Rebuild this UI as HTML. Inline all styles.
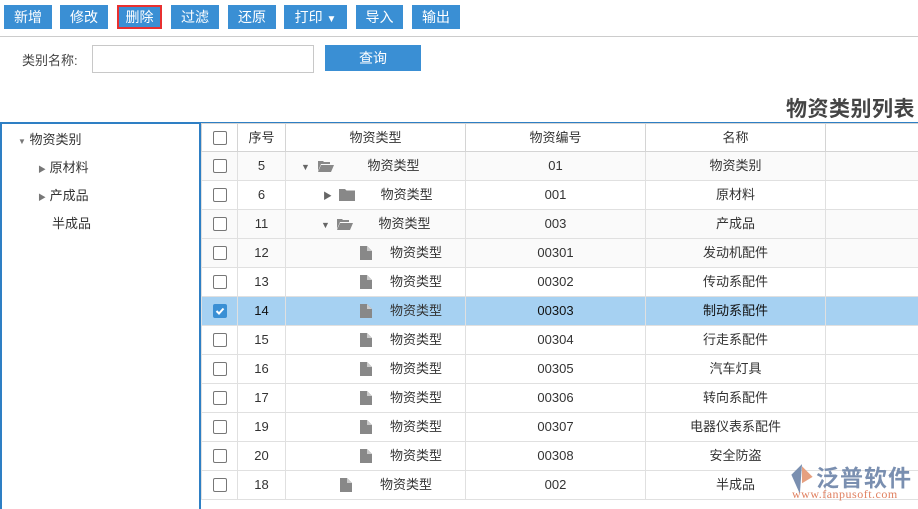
<!DOCTYPE html>
<html><head><meta charset="utf-8"><style>
*{margin:0;padding:0;box-sizing:border-box}
body{width:918px;height:509px;overflow:hidden;background:#fff;font-family:"Liberation Sans","Noto Sans CJK SC",sans-serif;font-size:13px;color:#333;position:relative}
.btn{position:absolute;top:5px;height:24px;background:#3a8fd4;color:#fff;font-size:14px;line-height:24px;text-align:center}
.abs{position:absolute}
table{position:absolute;left:201px;top:123px;border-collapse:collapse;table-layout:fixed;width:724px}
td,th{border:1px solid #e0e0e0;height:29px;text-align:center;font-weight:normal;font-size:13px;padding:0;white-space:nowrap;line-height:14px}
th{height:28px;border-color:#d4d4d4}
tr.alt td{background:#fafafa}
tr.sel td{background:#a6d1f2}
.cb{display:inline-block;width:14px;height:14px;border:1px solid #777;border-radius:2px;vertical-align:middle;background:#fff}
.cbc{background:#3a8fd4;border-color:#3a8fd4;position:relative}
.tn{text-align:left}
.ic{display:inline-block;vertical-align:middle}
</style></head><body>
<div class="btn" style="left:4px;width:48px">新增</div>
<div class="btn" style="left:60px;width:48px">修改</div>
<div class="btn" style="left:117px;width:45px;border:2px solid #e83030;line-height:20px">删除</div>
<div class="btn" style="left:171px;width:48px">过滤</div>
<div class="btn" style="left:228px;width:48px">还原</div>
<div class="btn" style="left:284px;width:63px">打印 <span style="font-size:10px">▼</span></div>
<div class="btn" style="left:356px;width:47px">导入</div>
<div class="btn" style="left:412px;width:48px">输出</div>
<div class="abs" style="left:0;top:36px;width:918px;height:1px;background:#ccc"></div>
<div class="abs" style="left:22px;top:50px;font-size:13px;color:#444">类别名称:</div>
<div class="abs" style="left:92px;top:45px;width:222px;height:28px;border:1px solid #c8c8c8"></div>
<div class="abs" style="left:325px;top:45px;width:96px;height:26px;background:#3a8fd4;color:#fff;font-size:14px;line-height:26px;text-align:center">查询</div>
<div class="abs" style="right:3px;top:93px;font-size:21px;font-weight:bold;color:#444;letter-spacing:0.5px">物资类别列表</div>
<div class="abs" style="left:0;top:122px;width:918px;height:2px;background:#2e7fc4"></div>
<div class="abs" style="left:0;top:122px;width:2px;height:387px;background:#2e7fc4"></div>
<div class="abs" style="left:199px;top:122px;width:2px;height:387px;background:#2e7fc4"></div>
<div class="abs" style="left:18px;top:129px;font-size:13px"><span style="font-size:8px;color:#777">▼</span> 物资类别</div>
<div class="abs" style="left:38px;top:157px;font-size:13px"><span style="font-size:8px;color:#777">▶</span> 原材料</div>
<div class="abs" style="left:38px;top:185px;font-size:13px"><span style="font-size:8px;color:#777">▶</span> 产成品</div>
<div class="abs" style="left:52px;top:213px;font-size:13px">半成品</div>
<svg width="0" height="0" style="position:absolute"><defs>
<symbol id="fo" viewBox="0 0 16 12"><path d="M0 1h5l1 1h6v2H3L0 11z M3 5h13l-3 7H0z" fill="#888"/></symbol>
<symbol id="fc" viewBox="0 0 16 12"><path d="M0 0h6l1.5 1.5H16V12H0z" fill="#888"/></symbol>
<symbol id="fi" viewBox="0 0 12 14"><path d="M0 0h7l5 5v9H0z" fill="#888"/><path d="M7 0v5h5" fill="#ccc"/></symbol>
</defs></svg>
<table>
<colgroup><col style="width:36px"><col style="width:48px"><col style="width:180px"><col style="width:180px"><col style="width:180px"><col style="width:100px"></colgroup>
<tr><th><span class="cb"></span></th><th>序号</th><th>物资类型</th><th>物资编号</th><th>名称</th><th></th></tr>
<tr class="alt"><td><span class="cb"></span></td><td>5</td><td class="tn"><span style="margin-left:15px;font-size:9px;color:#666">▼</span> <svg class="ic" width="16" height="12" style="margin-left:4px"><use href="#fo"/></svg><span style="margin-left:34px">物资类型</span></td><td>01</td><td>物资类别</td><td></td></tr>
<tr><td><span class="cb"></span></td><td>6</td><td class="tn"><span style="margin-left:37px;font-size:9px;color:#666">▶</span> <svg class="ic" width="16" height="12" style="margin-left:3px"><use href="#fc"/></svg><span style="margin-left:26px">物资类型</span></td><td>001</td><td>原材料</td><td></td></tr>
<tr class="alt"><td><span class="cb"></span></td><td>11</td><td class="tn"><span style="margin-left:35px;font-size:9px;color:#666">▼</span> <svg class="ic" width="16" height="12" style="margin-left:3px"><use href="#fo"/></svg><span style="margin-left:26px">物资类型</span></td><td>003</td><td>产成品</td><td></td></tr>
<tr class="alt"><td><span class="cb"></span></td><td>12</td><td class="tn"><svg class="ic" width="12" height="14" style="margin-left:74px"><use href="#fi"/></svg><span style="margin-left:18px">物资类型</span></td><td>00301</td><td>发动机配件</td><td></td></tr>
<tr><td><span class="cb"></span></td><td>13</td><td class="tn"><svg class="ic" width="12" height="14" style="margin-left:74px"><use href="#fi"/></svg><span style="margin-left:18px">物资类型</span></td><td>00302</td><td>传动系配件</td><td></td></tr>
<tr class="sel"><td><span class="cb cbc"><svg width="12" height="12" style="position:absolute;left:0;top:0"><path d="M2.5 6l2.5 2.5 4.5-5" stroke="#fff" stroke-width="2" fill="none"/></svg></span></td><td style="color:#111">14</td><td class="tn"><svg class="ic" width="12" height="14" style="margin-left:74px"><use href="#fi"/></svg><span style="margin-left:18px">物资类型</span></td><td style="color:#111">00303</td><td style="color:#111">制动系配件</td><td></td></tr>
<tr><td><span class="cb"></span></td><td>15</td><td class="tn"><svg class="ic" width="12" height="14" style="margin-left:74px"><use href="#fi"/></svg><span style="margin-left:18px">物资类型</span></td><td>00304</td><td>行走系配件</td><td></td></tr>
<tr><td><span class="cb"></span></td><td>16</td><td class="tn"><svg class="ic" width="12" height="14" style="margin-left:74px"><use href="#fi"/></svg><span style="margin-left:18px">物资类型</span></td><td>00305</td><td>汽车灯具</td><td></td></tr>
<tr><td><span class="cb"></span></td><td>17</td><td class="tn"><svg class="ic" width="12" height="14" style="margin-left:74px"><use href="#fi"/></svg><span style="margin-left:18px">物资类型</span></td><td>00306</td><td>转向系配件</td><td></td></tr>
<tr><td><span class="cb"></span></td><td>19</td><td class="tn"><svg class="ic" width="12" height="14" style="margin-left:74px"><use href="#fi"/></svg><span style="margin-left:18px">物资类型</span></td><td>00307</td><td>电器仪表系配件</td><td></td></tr>
<tr><td><span class="cb"></span></td><td>20</td><td class="tn"><svg class="ic" width="12" height="14" style="margin-left:74px"><use href="#fi"/></svg><span style="margin-left:18px">物资类型</span></td><td>00308</td><td>安全防盗</td><td></td></tr>
<tr><td><span class="cb"></span></td><td>18</td><td class="tn"><svg class="ic" width="12" height="14" style="margin-left:54px"><use href="#fi"/></svg><span style="margin-left:28px">物资类型</span></td><td>002</td><td>半成品</td><td></td></tr>
</table>
<svg class="abs" style="left:789px;top:462px" width="26" height="34" viewBox="0 0 24 32"><path d="M12 2L2 12l8 18z" fill="#7a8fb0"/><path d="M12 4l10 10-10 6z" fill="#e6a080"/></svg>
<div class="abs" style="left:816px;top:459px;font-size:23px;color:#7a8fb0;letter-spacing:1px;font-weight:bold">泛普软件</div>
<div class="abs" style="left:792px;top:487px;font-size:12px;color:#e08060;font-family:'Liberation Serif',serif;letter-spacing:0.5px">www.fanpusoft.com</div>
</body></html>
